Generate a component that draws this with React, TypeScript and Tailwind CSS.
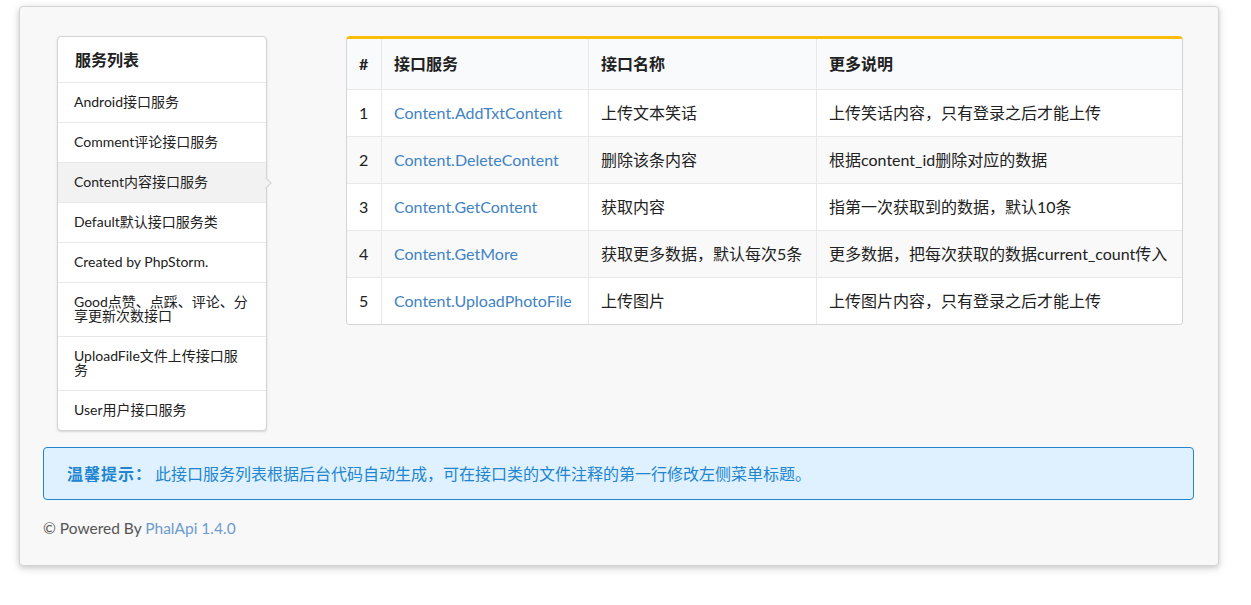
import React from "react";

const font = { fontFamily: 'Lato, "Noto Sans CJK SC", "Noto Sans", sans-serif' };

const menuItems: { label: string; active?: boolean }[] = [
  { label: "Android接口服务" },
  { label: "Comment评论接口服务" },
  { label: "Content内容接口服务", active: true },
  { label: "Default默认接口服务类" },
  { label: "Created by PhpStorm." },
  { label: "Good点赞、点踩、评论、分享更新次数接口" },
  { label: "UploadFile文件上传接口服务" },
  { label: "User用户接口服务" },
];

const rows = [
  ["1", "Content.AddTxtContent", "上传文本笑话", "上传笑话内容，只有登录之后才能上传"],
  ["2", "Content.DeleteContent", "删除该条内容", "根据content_id删除对应的数据"],
  ["3", "Content.GetContent", "获取内容", "指第一次获取到的数据，默认10条"],
  ["4", "Content.GetMore", "获取更多数据，默认每次5条", "更多数据，把每次获取的数据current_count传入"],
  ["5", "Content.UploadPhotoFile", "上传图片", "上传图片内容，只有登录之后才能上传"],
];

export default function App() {
  return (
    <div className="min-h-[605px] bg-white pt-[6px] text-[14px] text-[#212121]" style={font}>
      <div className="ml-[19px] w-[1200px] h-[560px] bg-[#f8f8f8] border border-[#d4d4d5] rounded-[4px] shadow-[0_2px_4px_0_rgba(34,36,38,0.12),0_2px_10px_0_rgba(34,36,38,0.15)] pl-[23px] pr-[23px] pt-[29px]">
        <div className="flex items-start">
          {/* Menu */}
          <div className="ml-[14px] w-[210px] bg-white border border-[#d4d4d5] rounded-[4px] shadow-[0_1px_2px_0_rgba(34,36,38,0.15)]">
            <div className="h-[45px] flex items-center pl-[17px] pr-4 font-bold text-[16px]">服务列表</div>
            {menuItems.map((m) => (
              <div
                key={m.label}
                className={
                  "relative border-t border-[#e8e8e8] pt-[12px] pb-[13px] px-4 leading-[14px] text-[14px] " +
                  (m.active ? "bg-[#f2f2f2]" : "")
                }
              >
                {m.label}
                {m.active && (
                  <span className="absolute right-0 top-1/2 w-[8px] h-[8px] bg-[#f2f2f2] border-t border-r border-[#d4d4d5] translate-x-1/2 -translate-y-1/2 rotate-45" />
                )}
              </div>
            ))}
          </div>

          {/* Table */}
          <div className="ml-[79px] w-[837px] bg-white border border-[#d4d4d5] border-t-[3px] border-t-[#fbbd08] rounded-[4px] overflow-hidden text-[16px]">
            <div className="grid grid-cols-[34px_207px_228px_1fr] h-[50px] bg-[#f9fafb] font-bold">
              <div className="flex items-center pl-3">#</div>
              <div className="flex items-center pl-3 border-l border-[#e8e8e8]">接口服务</div>
              <div className="flex items-center pl-3 border-l border-[#e8e8e8]">接口名称</div>
              <div className="flex items-center pl-3 border-l border-[#e8e8e8]">更多说明</div>
            </div>
            {rows.map((r, i) => (
              <div
                key={r[0]}
                className={
                  "grid grid-cols-[34px_207px_228px_1fr] h-[47px] border-t border-[#e8e8e8] " +
                  (i % 2 === 1 ? "bg-[#f9f9f9]" : "bg-white")
                }
              >
                <div className="flex items-center pl-3">{r[0]}</div>
                <div className="flex items-center pl-3 border-l border-[#e8e8e8] text-[#4183c4] whitespace-nowrap">{r[1]}</div>
                <div className="flex items-center pl-3 border-l border-[#e8e8e8] whitespace-nowrap">{r[2]}</div>
                <div className="flex items-center pl-3 border-l border-[#e8e8e8] whitespace-nowrap">{r[3]}</div>
              </div>
            ))}
          </div>
        </div>

        {/* Message */}
        <div className="mt-[16px] w-[1151px] h-[53px] flex items-center bg-[#dff0ff] border border-[#2185d0] rounded-[4px] pl-[23px] text-[16px] text-[#2185d0]">
          <span className="font-bold tracking-[1px]">温馨提示：</span>
          <span className="ml-[3px]">此接口服务列表根据后台代码自动生成，可在接口类的文件注释的第一行修改左侧菜单标题。</span>
        </div>

        {/* Footer */}
        <div className="mt-[18px] leading-[20px] text-[15.5px] text-[#555555]">
          © Powered By <span className="text-[#6b9bd1]">PhalApi 1.4.0</span>
        </div>
      </div>
    </div>
  );
}
